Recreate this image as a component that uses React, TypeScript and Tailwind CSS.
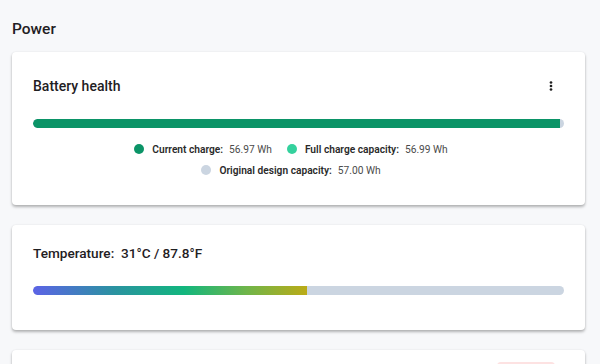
import React from "react";

const font = { fontFamily: 'Roboto, "Noto Sans", Arial, sans-serif' };

function Kebab() {
  return (
    <svg width="16" height="16" viewBox="0 0 16 16" className="text-[#1f1f1f]">
      <circle cx="8" cy="4.5" r="1.35" fill="currentColor" />
      <circle cx="8" cy="8" r="1.35" fill="currentColor" />
      <circle cx="8" cy="11.5" r="1.35" fill="currentColor" />
    </svg>
  );
}

function LegendItem({ color, label, value }: { color: string; label: string; value: string }) {
  return (
    <div className="flex items-center mr-[15px]">
      <span className="w-[10px] h-[10px] rounded-full" style={{ backgroundColor: color }} />
      <span className="ml-[8px] font-semibold text-[#2a2a2a]">{label}</span>
      <span className="ml-[6px] text-[#4b4b4b]">{value}</span>
    </div>
  );
}

export default function App() {
  return (
    <div className="min-h-[364px] bg-[#f7f8fa] px-[12px] pr-[15px] pt-[17px] overflow-hidden" style={font}>
      <div className="h-[24px] text-[15.5px] leading-[24px] font-medium text-[#1f2023]">Power</div>
      <div className="mt-[11px] bg-white rounded-[4px] shadow-[0_2px_3px_rgba(0,0,0,0.28),0_0_2px_rgba(0,0,0,0.08)] pt-[22px] pb-[24px] px-[21px]">
        <div className="h-[24px] flex items-center justify-between">
          <span className="text-[14px] font-medium text-[#1f2023]">Battery health</span>
          <span className="mr-[5px]"><Kebab /></span>
        </div>
        <div className="mt-[21px] h-[9px] rounded-full bg-[#cbd5e1] overflow-hidden flex">
          <div className="h-full bg-[#0b9467] rounded-l-full" style={{ width: "99.2%" }} />
        </div>
        <div className="mt-[11px] text-[10.2px]">
          <div className="h-[21px] flex items-center justify-center">
            <LegendItem color="#0b9467" label="Current charge:" value="56.97 Wh" />
            <LegendItem color="#34d19d" label="Full charge capacity:" value="56.99 Wh" />
          </div>
          <div className="h-[21px] flex items-center justify-center">
            <LegendItem color="#cbd5e1" label="Original design capacity:" value="57.00 Wh" />
          </div>
        </div>
      </div>
      <div className="mt-[20px] bg-white rounded-[4px] shadow-[0_2px_3px_rgba(0,0,0,0.28),0_0_2px_rgba(0,0,0,0.08)] pt-[16px] pb-[35px] px-[21px]">
        <div className="h-[24px] flex items-center">
          <span className="text-[13.6px] font-medium text-[#1f2023] whitespace-pre">Temperature:  31°C / 87.8°F</span>
        </div>
        <div className="mt-[21px] h-[9px] rounded-full bg-[#cbd5e1] overflow-hidden flex">
          <div
            className="h-full rounded-l-full bg-[linear-gradient(to_right,#5c63e6_0%,#2a93a0_30%,#12b67e_55%,#6fb54a_78%,#bbab17_100%)]"
            style={{ width: "51.6%" }}
          />
        </div>
      </div>
      <div className="mt-[20px] h-[40px] bg-white rounded-[4px] shadow-[0_2px_3px_rgba(0,0,0,0.28),0_0_2px_rgba(0,0,0,0.08)] flex justify-end pr-[30px] pt-[12px]">
        <div className="w-[58px] h-[20px] rounded-[4px] bg-[#fde2e2]" />
      </div>
    </div>
  );
}
